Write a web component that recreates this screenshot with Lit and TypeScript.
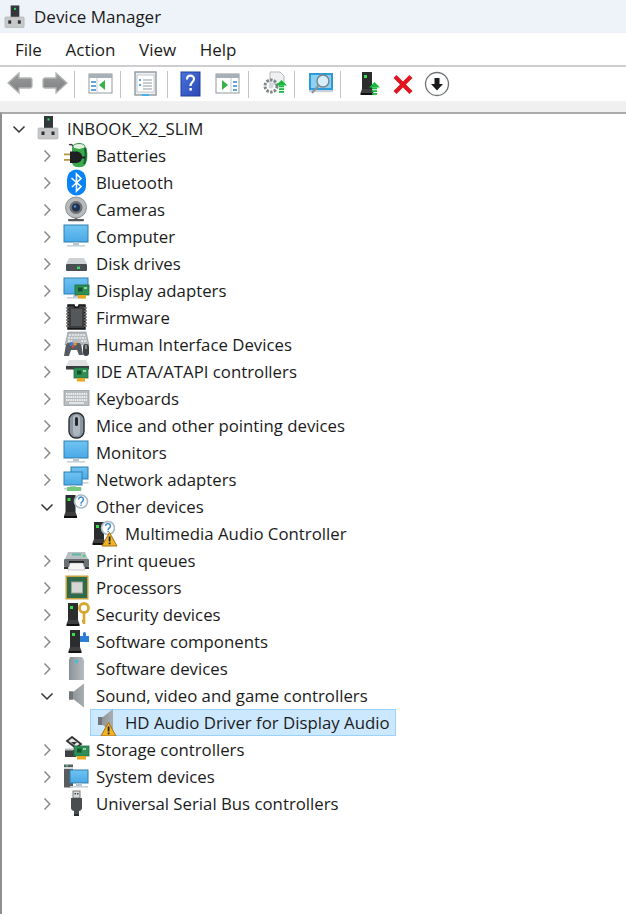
import { LitElement, html, css, svg, nothing } from "lit";
import { customElement } from "lit/decorators.js";

const tower = (x = 0, y = 0, s = 1) => svg`<g transform="translate(${x} ${y}) scale(${s})">
  <rect x="1" y="0" width="10" height="17" fill="#2b2d2e"/><rect x="3" y="3" width="3" height="3" fill="#35e04a"/>
  <path d="M1 17h10l1.5 4H-.5z" fill="#3c3e40"/><rect x="-.5" y="21" width="13" height="2" fill="#111"/></g>`;
const warn = (x = 0, y = 0) => svg`<g transform="translate(${x} ${y})">
  <path d="M7.5 0.5 15 14H0z" fill="#f0b429" stroke="#a86f12" stroke-width="1" stroke-linejoin="round"/>
  <rect x="6.700" y="4.500" width="1.800" height="5" fill="#222"/><rect x="6.700" y="10.500" width="1.800" height="1.800" fill="#222"/></g>`;
const question = (cx: number, cy: number, r = 6.5) => svg`<circle cx=${cx} cy=${cy} r=${r} fill="#fff" stroke="#a9b9c6" stroke-width="1.6"/>
  <path d="M${cx - 2.4} ${cy - 2}a2.4 2.4 0 1 1 3.7 2c-1 .7-1.3 1.1-1.3 2.2" fill="none" stroke="#3a87c9" stroke-width="1.5"/><rect x=${cx - .6} y=${cy + 3} width="1.4" height="1.4" fill="#3a87c9"/>`;
const monitor = (x = 3, y = 2, w = 25, h = 17) => svg`
  <rect x=${x} y=${y} width=${w} height=${h} fill="url(#scr)" stroke="#2e7fb0" stroke-width="1"/>
  <rect x=${x + w / 2 - 3} y=${y + h} width="6" height="3" fill="#b8c6d0"/>
  <rect x=${x + w / 2 - 9} y=${y + h + 3} width="18" height="1.6" fill="#c7d3dc"/>`;
const board = (x: number, y: number, w = 14, h = 11) => svg`
  <rect x=${x} y=${y} width=${w} height=${h} fill="#2f8f57" stroke="#1e6b3f" stroke-width=".8"/>
  <rect x=${x + 3} y=${y + 2.5} width="4.5" height="4" fill="#15522e"/><rect x=${x + 9} y=${y + 2} width="3" height="2" fill="#8fd3a6"/>
  <rect x=${x + 3} y=${y + h} width=${w - 6} height="3.5" fill="#eda81f"/>`;
const speaker = (x = 0, y = 0) => svg`<g transform="translate(${x} ${y})">
  <path d="M0 8h5L15 0v24L5 16H0z" fill="url(#spk)"/><path d="M5 8 15 0v24L5 16z" fill="#8f9599" opacity=".55"/><rect x="0" y="8" width="4" height="8" fill="#6f7579"/></g>`;
const arrowUp = (x: number, y: number) => svg`<g transform="translate(${x} ${y})" fill="#18b83c">
  <path d="M5.500 0 11 5.500H0z"/><rect x="3" y="5.500" width="5" height="1.800"/><rect x="3" y="8.200" width="5" height="1.800"/><rect x="3" y="11" width="5" height="1.800"/></g>`;

const ICONS: Record<string, unknown> = {
  root: svg`<rect x="11" y="1" width="9" height="12" fill="#33363a"/><rect x="14.500" y="3.500" width="2" height="2" fill="#2ee05a"/>
    <rect x="5" y="13" width="20" height="11" rx="1" fill="#c6c8ca" stroke="#a8abad" stroke-width=".6"/><rect x="8.500" y="16.500" width="3" height="3.500" fill="#2d2f31"/><rect x="18.500" y="16.500" width="3" height="3.500" fill="#2d2f31"/>`,
  batteries: svg`<path d="M8 3c3-2 5 2 5 4" fill="none" stroke="#3c3e40" stroke-width="1.500"/><ellipse cx="18" cy="4.500" rx="6" ry="3" fill="#dff1df" stroke="#3b8a45"/>
    <path d="M11 5q7 4 14 0c2 5 2 14-1 18-2 3-10 3-12 0-1-1-1-3-1-5z" fill="#38a84a"/><path d="M24 6c1 6 1 12-1 16" stroke="#15602a" stroke-width="2" fill="none"/>
    <rect x="3" y="11.500" width="7" height="1.800" fill="#b39b3c"/><rect x="3" y="17" width="7" height="1.800" fill="#b39b3c"/><path d="M9 9.500h6c4 0 6 2.500 6 5.500s-2 6-6 6H9z" fill="#1d1f20"/><path d="M20 15.500h4" stroke="#1d1f20" stroke-width="2"/>`,
  bluetooth: svg`<rect x="6" y=".5" width="19" height="26" rx="9.500" fill="#0a84f5"/><path d="M10.500 9 20 17.500 15.500 22V5l4.500 4.500-9 8.500" fill="none" stroke="#fff" stroke-width="1.600"/>`,
  cameras: svg`<rect x="13.500" y="20" width="3" height="4" fill="#6f7477"/><rect x="7" y="23" width="16" height="2.200" rx="1" fill="#55595c"/>
    <circle cx="15" cy="11.500" r="10.500" fill="#b9bcbd" stroke="#8b8f91"/><circle cx="15" cy="11.500" r="6.500" fill="#6c7073"/><circle cx="15" cy="11.500" r="4" fill="#1e3350"/><circle cx="14" cy="10.500" r="1.300" fill="#5c8cd0"/>`,
  computer: monitor(3, 2, 24, 17),
  disk: svg`<path d="M8 8h15l3 6H5z" fill="#cfd2d4"/><rect x="5" y="14" width="21" height="7" rx="1" fill="#4a4d50"/><rect x="16" y="16.500" width="3" height="2.500" fill="#3fd36b"/>`,
  display: svg`${monitor(3, 1, 24, 16)}${board(14, 8, 14, 10)}`,
  firmware: svg`<path d="M7 1h6c0 3 5 3 5 0h6v24H7z" fill="#3b3d3f" stroke="#111" stroke-width="1.400"/><rect x="10" y="5" width="11" height="17" fill="#55585a"/>
    <path d="M5 4h3M5 7h3M5 10h3M5 13h3M5 16h3M5 19h3M5 22h3M23 4h3M23 7h3M23 10h3M23 13h3M23 16h3M23 19h3M23 22h3" stroke="#777" stroke-width="1.300"/>`,
  hid: svg`<path d="M7 1h18l3 13H4z" fill="#b5babe" stroke="#8d9296" stroke-width=".6"/><path d="M8 4h16M7 7h18M7 10h4M20 10h6" stroke="#eef0f1" stroke-width="1.300" stroke-dasharray="2 .8"/>
    <path d="M7 12h11c1 0 2 1 2.500 3l1.500 9h-4l-2-5h-6l-2 6H3l1.500-9c.5-2 1.500-4 2.500-4z" fill="#555b61"/>
    <circle cx="10.500" cy="13" r="2" fill="#3a7fd0"/><circle cx="14" cy="13" r="1.800" fill="#e2913b"/><circle cx="12" cy="15.500" r="1.300" fill="#d94a3f"/>
    <rect x="22" y="13" width="6" height="12" rx="3" fill="#3f4346"/><rect x="24.500" y="14" width="1" height="4" fill="#ccc"/>`,
  ide: svg`<path d="M8 2h17l3 6H5z" fill="#dfe1e2"/><rect x="5" y="8" width="23" height="3.500" fill="#3a3d40"/>${board(13, 10, 14, 10)}`,
  keyboards: svg`<rect x="3" y="5.500" width="25" height="15" fill="#b8bcbf" stroke="#97a0a6" stroke-width=".8"/><path d="M5 9h21M5 12h21M5 15h21" stroke="#eceef0" stroke-width="1.800" stroke-dasharray="1.500 .7"/><rect x="8" y="17.200" width="15" height="1.600" fill="#eceef0"/>`,
  mice: svg`<rect x="8" y="1" width="15" height="25" rx="7" fill="#8b96a3" stroke="#2a2d30" stroke-width="1.400"/><rect x="12" y="3" width="7" height="21" rx="3.500" fill="#aeb7c0"/><rect x="14" y="5" width="3" height="9" rx="1.500" fill="#24272a"/>`,
  monitors: monitor(3, 2, 24, 17),
  network: svg`${monitor(10, 1, 17, 12)}${monitor(3, 6, 18, 13)}<rect x="6" y="21" width="14" height="4" fill="#74c97f"/>`,
  other: svg`${tower(3.500, 2)}${question(20, 8.500)}`,
  multimedia: svg`${tower(3, 2)}${question(18, 8)}${warn(12, 12)}`,
  printer: svg`<path d="M7 5h17l3 7H4z" fill="#b9bfc2"/><rect x="11" y="6.500" width="9" height="2" fill="#59b9a5"/><rect x="22" y="8" width="2" height="2" fill="#2ee05a"/>
    <rect x="3" y="12" width="25" height="8" rx="1" fill="#6b7074"/><rect x="8" y="14" width="15" height="2" fill="#1f2123"/><path d="M9 16h13l2 7H7z" fill="#f5f5f5" stroke="#999" stroke-width=".5"/><rect x="3" y="20" width="4" height="2" fill="#333"/><rect x="24" y="20" width="4" height="2" fill="#333"/>`,
  processors: svg`<rect x="4.500" y="1.500" width="23" height="24" fill="#c9a13f"/><rect x="6" y="3" width="20" height="21" fill="#2f6a4a"/><rect x="10.500" y="8" width="11" height="11" fill="#d6d6d2" stroke="#9ea2a0"/>`,
  security: svg`${tower(6, 2)}<circle cx="23" cy="7" r="4.500" fill="none" stroke="#d5a630" stroke-width="2.800"/><path d="M23 11v12M23 20h-2" stroke="#d5a630" stroke-width="2.600"/>`,
  components: svg`${tower(8, 2)}<path d="M19 8h3V5.500a1.500 1.500 0 0 1 3 0V8h3v6H19z" fill="#2c7fd6"/>`,
  softdev: svg`<path d="M9 2h12l2 3v20H8V5z" fill="url(#tow)"/><rect x="14" y="5" width="3" height="3" fill="#36c6d8"/>`,
  sound: speaker(8, 1.500),
  hdaudio: speaker(8, 0),
  storage: svg`<path d="M11 1 20 8l-5 4-9-7z" fill="#e4e5e6" stroke="#333" stroke-width="1.800"/><path d="M10 6h6l-3 3z" fill="#333"/><path d="M4 14h11v7H4z" fill="#3f4245"/><rect x="4" y="12.500" width="8" height="2" fill="#b8bcbf"/>${board(13, 10, 15, 10)}`,
  system: svg`<rect x="3" y="1.500" width="9" height="23" fill="#5a5d60"/><rect x="3" y="4" width="9" height="2" fill="#d5d8da"/><rect x="5" y="2" width="2" height="1.500" fill="#3fd36b"/>${monitor(9, 7, 18, 13)}`,
  usb: svg`<rect x="12" y="1" width="7" height="7" fill="#d8dadb" stroke="#777"/><rect x="13.500" y="3" width="1.500" height="1.500" fill="#444"/><rect x="16" y="3" width="1.500" height="1.500" fill="#444"/>
    <path d="M10 8h11v10c0 2-2 3-3 3v3h-5v-3c-1 0-3-1-3-3z" fill="#4a4d50"/><rect x="13" y="24" width="5" height="2" fill="#2c2e30"/>`,
};

const TB: Record<string, unknown> = {
  back: svg`<path d="M1 12 12 2v5h11c1 0 2 1 2 2v6c0 1-1 2-2 2H12v5z" fill="url(#arr)" stroke="#b4b6b7" stroke-width="1.300"/>`,
  fwd: svg`<path d="M25 12 14 2v5H3C2 7 1 8 1 9v6c0 1 1 2 2 2h11v5z" fill="url(#arr)" stroke="#b4b6b7" stroke-width="1.300"/>`,
  win1: svg`<rect x="1" y="3" width="23" height="19" fill="#fff" stroke="#8f999f"/><rect x="1" y="3" width="23" height="4" fill="#a7b0b6"/><rect x="3" y="10" width="5" height="2" fill="#62a5d8"/><rect x="3" y="14" width="5" height="2" fill="#62a5d8"/><rect x="3" y="18" width="5" height="2" fill="#62a5d8"/><path d="M17 9v10l-6-5z" fill="#36b24a"/><path d="M9 7v15" stroke="#c5cbce"/>`,
  props: svg`<rect x="1" y="1" width="21" height="23" fill="#eef1f3" stroke="#8f999f" stroke-width="1.400"/><rect x="3" y="4" width="17" height="17" fill="#fff" stroke="#c4cace"/><rect x="5" y="8" width="2" height="2" fill="#5aa6dc"/><path d="M9 9h9M9 12h9M9 15h9M9 18h9" stroke="#8f999f"/><rect x="5" y="13" width="2" height="2" fill="#5aa6dc"/><rect x="8" y="23" width="7" height="2" fill="#46b0e8"/>`,
  help: svg`<rect x="1" y="1" width="19" height="24" fill="url(#hlp)" stroke="#1c3fa0"/><path d="M7 8.500c0-5 7-5 7-.5 0 3-3.500 3-3.500 7" fill="none" stroke="#fff" stroke-width="2.200"/><rect x="9.400" y="17" width="2.400" height="2.600" fill="#fff"/>`,
  win2: svg`<rect x="1" y="3" width="23" height="19" fill="#fff" stroke="#8f999f"/><rect x="1" y="3" width="23" height="4" fill="#a7b0b6"/><path d="M7 9v10l6-5z" fill="#36b24a"/><path d="M16 7v15" stroke="#c5cbce"/><rect x="18" y="10" width="4" height="2" fill="#62a5d8"/><rect x="18" y="14" width="4" height="2" fill="#62a5d8"/><rect x="18" y="18" width="4" height="2" fill="#62a5d8"/>`,
  gear: svg`<path d="M8 1h10l4 4v8H8z" fill="#eef0f1" stroke="#b4b9bc"/><circle cx="9" cy="15" r="6" fill="none" stroke="#80868a" stroke-width="3" stroke-dasharray="2.500 1.300"/><circle cx="9" cy="15" r="2.500" fill="#d5d8da"/>${arrowUp(14, 9)}`,
  scan: svg`<rect x="1" y="2" width="24" height="17" fill="#2f9ad8"/><rect x="3" y="4" width="20" height="13" fill="#8cd1f3"/><rect x="1" y="19" width="24" height="2.200" fill="#c9d2d8"/><circle cx="15" cy="10" r="6" fill="#d8eefb" stroke="#7a858c" stroke-width="1.500"/><path d="M10.500 14.500 4 22" stroke="#8b949a" stroke-width="2"/>`,
  update: svg`${tower(7, 1)}${arrowUp(15, 11)}`,
  del: svg`<g transform="translate(2.500 2)"><path d="M2 5 5 2l6.500 6.500L18 2l3 3-6.500 6.500L21 18l-3 3-6.500-6.500L5 21l-3-3 6.500-6.500z" fill="#e0141f"/></g>`,
  down: svg`<circle cx="13" cy="13" r="11.500" fill="#fff" stroke="#6e7376" stroke-width="1.300"/><path d="M10.500 7h5v6H19l-6 6.500L7 13h3.500z" fill="#1a1a1a"/>`,
};

const tree: { d: 0 | 1 | 2; t: string; i: string; c?: "o" | "c"; sel?: boolean }[] = [
  { d: 0, t: "INBOOK_X2_SLIM", i: "root", c: "o" },
  { d: 1, t: "Batteries", i: "batteries", c: "c" },
  { d: 1, t: "Bluetooth", i: "bluetooth", c: "c" },
  { d: 1, t: "Cameras", i: "cameras", c: "c" },
  { d: 1, t: "Computer", i: "computer", c: "c" },
  { d: 1, t: "Disk drives", i: "disk", c: "c" },
  { d: 1, t: "Display adapters", i: "display", c: "c" },
  { d: 1, t: "Firmware", i: "firmware", c: "c" },
  { d: 1, t: "Human Interface Devices", i: "hid", c: "c" },
  { d: 1, t: "IDE ATA/ATAPI controllers", i: "ide", c: "c" },
  { d: 1, t: "Keyboards", i: "keyboards", c: "c" },
  { d: 1, t: "Mice and other pointing devices", i: "mice", c: "c" },
  { d: 1, t: "Monitors", i: "monitors", c: "c" },
  { d: 1, t: "Network adapters", i: "network", c: "c" },
  { d: 1, t: "Other devices", i: "other", c: "o" },
  { d: 2, t: "Multimedia Audio Controller", i: "multimedia" },
  { d: 1, t: "Print queues", i: "printer", c: "c" },
  { d: 1, t: "Processors", i: "processors", c: "c" },
  { d: 1, t: "Security devices", i: "security", c: "c" },
  { d: 1, t: "Software components", i: "components", c: "c" },
  { d: 1, t: "Software devices", i: "softdev", c: "c" },
  { d: 1, t: "Sound, video and game controllers", i: "sound", c: "o" },
  { d: 2, t: "HD Audio Driver for Display Audio", i: "hdaudio", sel: true },
  { d: 1, t: "Storage controllers", i: "storage", c: "c" },
  { d: 1, t: "System devices", i: "system", c: "c" },
  { d: 1, t: "Universal Serial Bus controllers", i: "usb", c: "c" },
];

const toolbar: (string | null)[] = ["back", "fwd", null, "win1", null, "props", null, "help", "win2", null, "gear", null, "scan", null, "update", "del", "down"];

@customElement("app-root")
export class AppRoot extends LitElement {
  static styles = css`
    :host { display: block; width: 626px; height: 915px; overflow: hidden; background: #fff; color: #1b1b1b;
      font-family: "Open Sans", "Noto Sans", sans-serif; font-size: 16.8px; }
    .defs { display: block; width: 0; height: 0; }
    .title { height: 33px; background: #eef2f9; display: flex; align-items: center; padding-left: 3px; gap: 7px; font-size: 17px; }
    .title svg { width: 24px; height: 25px; flex: none; filter: blur(.3px); }
    .menu { height: 34px; display: flex; align-items: center; padding-left: 15px; gap: 23.600px; border-bottom: 2px solid #cfcfd2; box-sizing: border-box; font-size: 17px; }
    .toolbar { height: 34px; display: flex; align-items: center; padding-left: 2px; box-sizing: border-box; }
    .tb { width: 35px; height: 27px; display: flex; align-items: center; justify-content: center; flex: none; }
    .tb svg { width: 26px; height: 26px; filter: blur(.3px); }
    .sep { width: 1px; height: 27px; background: #c4c4c4; margin: 0 8.300px 0 2px; flex: none; }
    .band { height: 11px; background: #f0f0f0; }
    .tree { border-left: 2px solid #8f8f8f; border-top: 2px solid #a9a9a9; box-sizing: border-box; height: 802px; padding-top: 1px; }
    .row { height: 27px; display: flex; align-items: center; white-space: nowrap; }
    .d0 { padding-left: 3px; } .d1 { padding-left: 31px; } .d2 { padding-left: 60px; }
    .chev { width: 28px; height: 27px; display: flex; align-items: center; justify-content: center; flex: none; }
    .chev svg { width: 14px; height: 14px; }
    .label { display: flex; align-items: center; height: 27px; box-sizing: border-box; padding-right: 6px; }
    .sel { background: #cce8ff; outline: 1px solid #99d1ff; outline-offset: -1px; }
    .ico { width: 29px; height: 27px; flex: none; display: block; margin-right: 6px; filter: blur(.3px); }
    .d0 .ico { margin-right: 5px; }
  `;

  render() {
    return html`
      <svg class="defs" aria-hidden="true"><defs>
        <linearGradient id="scr" x1="0" y1="0" x2="0" y2="1"><stop offset="0" stop-color="#6fc3f2"/><stop offset="1" stop-color="#4aa9e6"/></linearGradient>
        <linearGradient id="spk" x1="0" y1="0" x2="1" y2="0"><stop offset="0" stop-color="#7b8084"/><stop offset="1" stop-color="#c9ccce"/></linearGradient>
        <linearGradient id="tow" x1="0" y1="0" x2="1" y2="0"><stop offset="0" stop-color="#8a9299"/><stop offset="1" stop-color="#b7bcc1"/></linearGradient>
        <linearGradient id="arr" x1="0" y1="0" x2="0" y2="1"><stop offset="0" stop-color="#9a9c9d"/><stop offset="1" stop-color="#7c7f81"/></linearGradient>
        <linearGradient id="hlp" x1="0" y1="0" x2="1" y2="1"><stop offset="0" stop-color="#4c72dd"/><stop offset="1" stop-color="#2a49b2"/></linearGradient>
      </defs></svg>
      <div class="title"><svg viewBox="3 0 25 25">${ICONS.root}</svg><span>Device Manager</span></div>
      <div class="menu"><span>File</span><span>Action</span><span>View</span><span>Help</span></div>
      <div class="toolbar">
        ${toolbar.map((k) => k === null ? html`<div class="sep"></div>` : html`<div class="tb"><svg viewBox="0 0 26 26">${TB[k]}</svg></div>`)}
      </div>
      <div class="band"></div>
      <div class="tree">
        ${tree.map((r) => html`
          <div class="row d${r.d}">
            <div class="chev">${r.c === "c"
              ? html`<svg viewBox="0 0 14 14"><path d="M4.500 1.500 9.800 7l-5.300 5.500" fill="none" stroke="#8a8a8a" stroke-width="1.500"/></svg>`
              : r.c === "o"
              ? html`<svg viewBox="0 0 14 14"><path d="M1.500 4.500 7 10l5.500-5.500" fill="none" stroke="#333" stroke-width="1.500"/></svg>`
              : nothing}</div>
            <div class="label ${r.sel ? "sel" : ""}">
              <svg class="ico" viewBox="0 0 29 27">${ICONS[r.i]}${r.i === "hdaudio" ? warn(11, 13) : nothing}</svg>
              <span>${r.t}</span>
            </div>
          </div>`)}
      </div>
    `;
  }
}
